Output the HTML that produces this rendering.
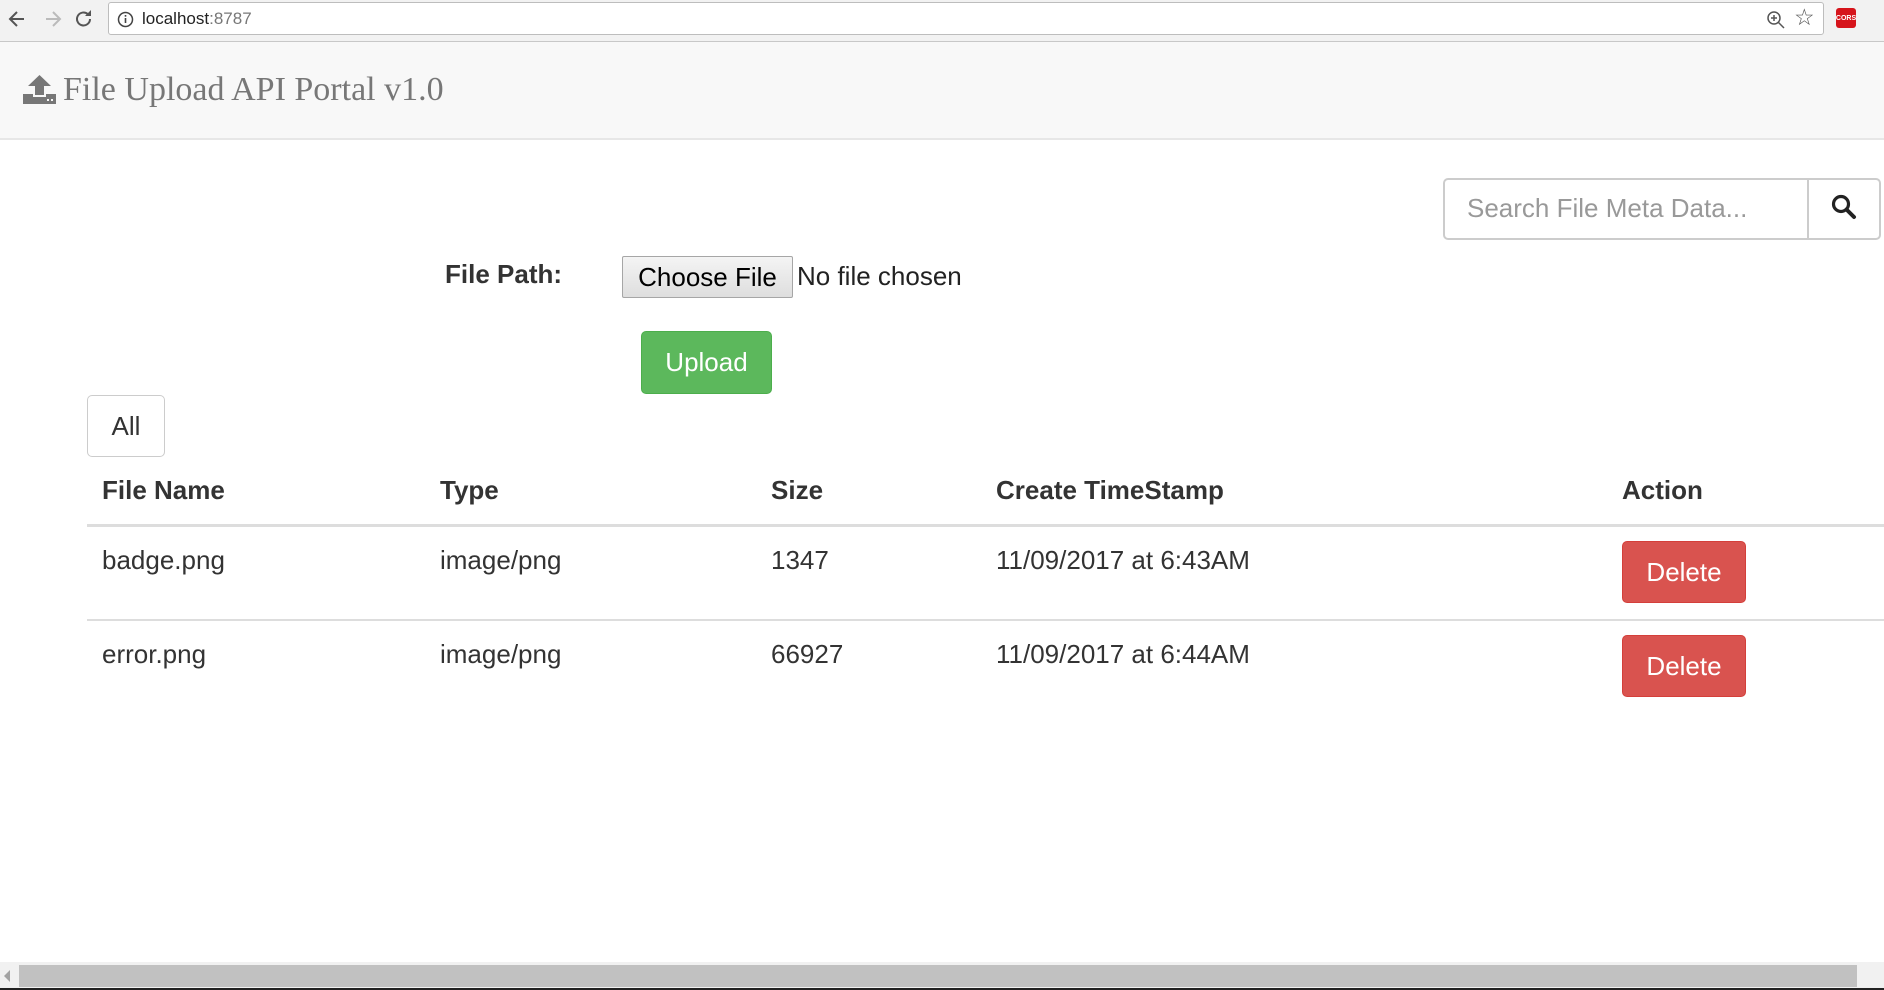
<!DOCTYPE html>
<html><head><meta charset="utf-8"><style>
*{box-sizing:border-box;margin:0;padding:0}
body{width:1884px;height:990px;overflow:hidden;background:#fff;font-family:"Liberation Sans",Arial,sans-serif;color:#333;position:relative}
.a{position:absolute}
.t{font-size:26px;white-space:nowrap;line-height:1}
.b{font-weight:bold}
.btn{position:absolute;border-radius:5px;color:#fff;font-size:26px;display:flex;align-items:center;justify-content:center}
.del{background:#d9534f;border:1px solid #d43f3a;left:1622px;width:124px;height:62px}
</style></head><body>
<!-- browser chrome -->
<div class="a" style="left:0;top:0;width:1884px;height:42px;background:#f2f2f2;border-bottom:1px solid #c8c8c8"></div>
<div class="a" style="left:108px;top:2px;width:1716px;height:33px;background:#fff;border:1px solid #bdbdbd;border-radius:3px"></div>
<svg class="a" style="left:6px;top:8px" width="90" height="24" viewBox="0 0 90 24">
<path d="M18 11H5M11 4L4 11L11 18" stroke="#555" stroke-width="2" fill="none"/>
<path d="M40 11H53M47 4L54 11L47 18" stroke="#bbb" stroke-width="2" fill="none"/>
<path d="M85 11a6.5 6.5 0 1 1-2-4.7" stroke="#555" stroke-width="2" fill="none" transform="translate(-1,0)"/>
<path d="M85 2v6h-6" fill="#555"/>
</svg>
<svg class="a" style="left:117px;top:11px" width="17" height="17" viewBox="0 0 17 17"><circle cx="8.5" cy="8.5" r="7" stroke="#444" stroke-width="1.5" fill="none"/><rect x="7.7" y="7" width="1.6" height="5" fill="#444"/><rect x="7.7" y="4" width="1.6" height="1.7" fill="#444"/></svg>
<div class="a" style="left:142px;top:9px;font-size:17px;color:#222">localhost<span style="color:#777">:8787</span></div>
<svg class="a" style="left:1766px;top:10px" width="20" height="20" viewBox="0 0 20 20"><circle cx="8" cy="8" r="6" stroke="#555" stroke-width="1.5" fill="none"/><path d="M12.5 12.5L18 18M5 8h6M8 5v6" stroke="#555" stroke-width="1.5"/></svg>
<div class="a" style="left:1794px;top:4px;font-size:23px;color:#555">☆</div>
<div class="a" style="left:1836px;top:8px;width:20px;height:20px;background:#d6141b;border-radius:3px;color:#fff;font-size:7px;font-weight:bold;display:flex;align-items:center;justify-content:center">CORS</div>
<!-- navbar -->
<div class="a" style="left:0;top:42px;width:1884px;height:98px;background:#f8f8f8;border-bottom:2px solid #e7e7e7"></div>
<svg class="a" style="left:23px;top:75px" width="33" height="29" viewBox="0 0 33 29"><path d="M16.5 0L28 11H21v9H12v-9H5z" fill="#777"/><path d="M0 19h10v3h13v-3h10v10H0z" fill="#777"/><rect x="24" y="24" width="2" height="2" fill="#f8f8f8"/><rect x="28" y="24" width="2" height="2" fill="#f8f8f8"/></svg>
<div class="a" style="left:63px;top:71px;font-family:'Liberation Serif',serif;font-size:34px;color:#777;white-space:nowrap">File Upload API Portal v1.0</div>
<!-- search -->
<div class="a" style="left:1443px;top:178px;width:366px;height:62px;border:2px solid #ccc;border-radius:5px 0 0 5px"></div>
<div class="a t" style="left:1467px;top:195px;color:#999">Search File Meta Data...</div>
<div class="a" style="left:1807px;top:178px;width:74px;height:62px;border:2px solid #ccc;border-radius:0 5px 5px 0"></div>
<svg class="a" style="left:1831px;top:194px" width="26" height="26" viewBox="0 0 26 26"><circle cx="10" cy="10" r="7.5" stroke="#222" stroke-width="3.2" fill="none"/><path d="M15.5 15.5L23 23" stroke="#222" stroke-width="4" stroke-linecap="round"/></svg>
<!-- form -->
<div class="a t b" style="left:445px;top:261px">File Path:</div>
<div class="a" style="left:622px;top:256px;width:171px;height:42px;background:linear-gradient(#f4f4f4,#dedede);border:1px solid #a6a6a6;border-radius:2px;font-size:26px;color:#000;display:flex;align-items:center;justify-content:center">Choose File</div>
<div class="a t" style="left:797px;top:263px;color:#222">No file chosen</div>
<div class="btn" style="left:641px;top:331px;width:131px;height:63px;background:#5cb85c;border:1px solid #4cae4c">Upload</div>
<div class="btn" style="left:87px;top:395px;width:78px;height:62px;background:#fff;border:1.5px solid #ccc;color:#333">All</div>
<!-- table -->
<div class="a t b" style="left:102px;top:477px">File Name</div>
<div class="a t b" style="left:440px;top:477px">Type</div>
<div class="a t b" style="left:771px;top:477px">Size</div>
<div class="a t b" style="left:996px;top:477px">Create TimeStamp</div>
<div class="a t b" style="left:1622px;top:477px">Action</div>
<div class="a" style="left:87px;top:524px;width:1797px;height:3px;background:#ddd"></div>
<div class="a t" style="left:102px;top:547px">badge.png</div>
<div class="a t" style="left:440px;top:547px">image/png</div>
<div class="a t" style="left:771px;top:547px">1347</div>
<div class="a t" style="left:996px;top:547px">11/09/2017 at 6:43AM</div>
<div class="btn del" style="top:541px">Delete</div>
<div class="a" style="left:87px;top:619px;width:1797px;height:1.5px;background:#ddd"></div>
<div class="a t" style="left:102px;top:641px">error.png</div>
<div class="a t" style="left:440px;top:641px">image/png</div>
<div class="a t" style="left:771px;top:641px">66927</div>
<div class="a t" style="left:996px;top:641px">11/09/2017 at 6:44AM</div>
<div class="btn del" style="top:635px">Delete</div>
<!-- scrollbar -->
<div class="a" style="left:0;top:962px;width:1884px;height:26px;background:#f1f1f1"></div>
<div class="a" style="left:19px;top:965px;width:1838px;height:22px;background:#c1c1c1"></div>
<svg class="a" style="left:2px;top:969px" width="10" height="14"><path d="M8 1L2 7L8 13z" fill="#a3a3a3"/></svg>
<div class="a" style="left:0;top:988px;width:1884px;height:2px;background:#222"></div>
</body></html>
